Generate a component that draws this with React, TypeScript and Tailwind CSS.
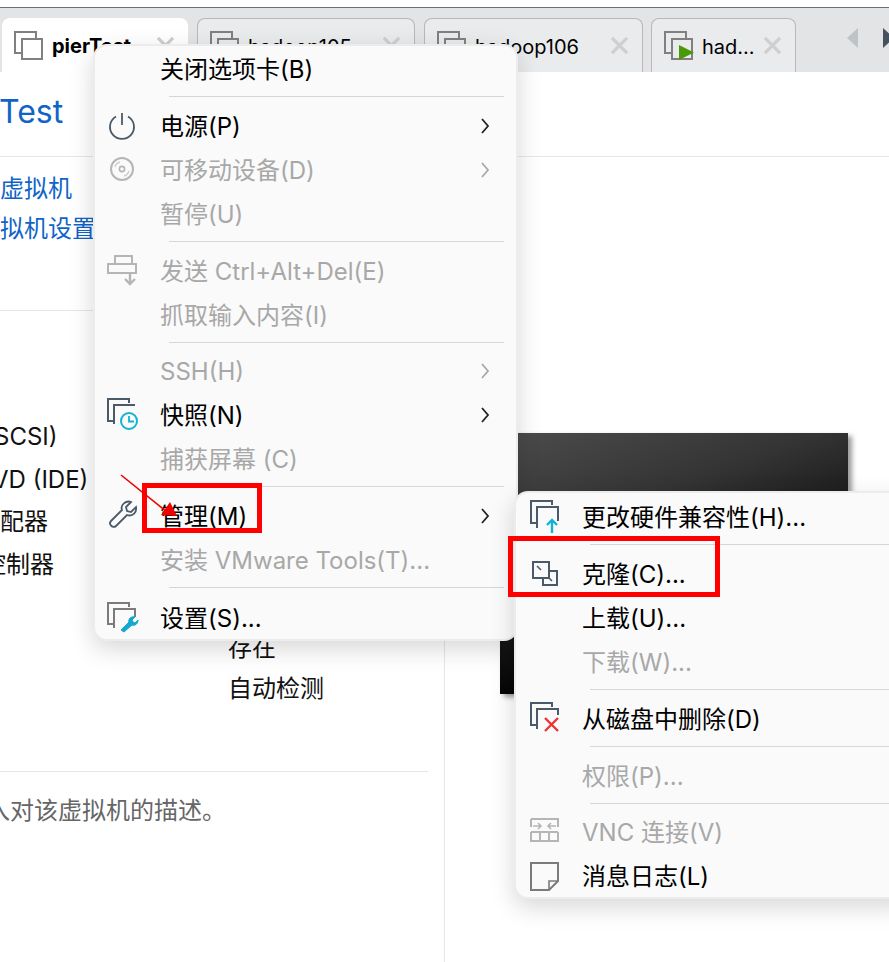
const font = "font-['Inter','Noto_Sans_CJK_SC',sans-serif]";

function Copies({ color = "#808080" }: { color?: string }) {
  return (
    <svg width="29" height="29" viewBox="0 0 29 29" fill="none" stroke={color} strokeWidth="2">
      <path d="M7 22H1V1h21v6" />
      <path d="M8 8h20v20H8z" />
    </svg>
  );
}

function Tab({ w, label, ml, active, run }: { w: string; label: string; ml: string; active?: boolean; run?: boolean }) {
  return (
    <div className={`${w} ${ml} h-[54px] shrink-0 rounded-t-[8px] flex items-center pl-[12px] ${active ? "bg-white" : "bg-[#eaebed] border border-b-0 border-[#b8b8b8]"}`}>
      <span className="relative block w-[29px] h-[29px] shrink-0">
        <Copies />
        {run && (
          <svg width="15" height="15" viewBox="0 0 15 15" className="absolute left-[15px] top-[14px]">
            <path d="M0 0l15 7.5L0 15z" fill="#4a9a08" />
          </svg>
        )}
      </span>
      <span className={`ml-[9px] pt-[2px] text-[20px] leading-[30px] whitespace-nowrap text-black ${active ? "font-bold" : ""}`}>{label}</span>
      <span className="ml-auto mr-[13px] block">
        <svg width="19" height="19" viewBox="0 0 20 20" stroke="#cfcfcf" strokeWidth="3.4"><path d="M2 2l16 16M18 2L2 18" /></svg>
      </span>
    </div>
  );
}

function Row({ label, disabled, arrow, icon, pl }: { label: string; disabled?: boolean; arrow?: boolean; icon?: React.ReactNode; pl: string }) {
  return (
    <div className={`h-[44px] relative flex items-center ${pl} pr-[24px] text-[24px] whitespace-nowrap ${disabled ? "text-[#a8a8a8]" : "text-black"}`}>
      {icon}
      <span className="pt-[4px]">{label}</span>
      {arrow && (
        <svg width="10" height="16" viewBox="0 0 10 16" fill="none" stroke={disabled ? "#a8a8a8" : "#222"} strokeWidth="1.8" className="absolute right-[26px] top-[15px]">
          <path d="M2 1l6 7-6 7" />
        </svg>
      )}
    </div>
  );
}

function Sep({ ml, h = "h-[13px]" }: { ml: string; h?: string }) {
  return (
    <div className={`${h} ${ml} pt-[6px]`}>
      <div className="h-px bg-[#d6d6d6]" />
    </div>
  );
}

const Ic = ({ children, left }: { children: React.ReactNode; left: string }) => (
  <svg width="32" height="34" viewBox="0 0 32 34" fill="none" className={`absolute ${left} top-[5px]`}>{children}</svg>
);

const slate = "#4a5a68";

export default function App() {
  return (
    <div className={`${font} relative w-[889px] h-[962px] overflow-hidden bg-white`}>
      <div className="h-[7px] bg-white" />
      <div className="h-px bg-[#6f6f6f]" />
      <div className="h-[64px] bg-[#e3e4e6] flex items-end pl-[2px] overflow-hidden relative">
        <Tab w="w-[186px]" ml="" label="pierTest" active />
        <Tab w="w-[218px]" ml="ml-[9px]" label="hadoop105" />
        <Tab w="w-[219px]" ml="ml-[9px]" label="hadoop106" />
        <Tab w="w-[145px]" ml="ml-[8px]" label="had..." run />
        <svg width="12" height="22" viewBox="0 0 12 22" className="absolute left-[847px] top-[20px]"><path d="M11 0v20L0 10z" fill="#bfc3c7" /></svg>
        <svg width="12" height="22" viewBox="0 0 12 22" className="absolute left-[883px] top-[20px]"><path d="M0 0v20l11-10z" fill="#46525e" /></svg>
      </div>

      <div className="h-[85px] border-b border-[#e6e6e6] flex items-center">
        <span className="text-[32px] leading-none text-[#0f64c8] mt-[-4px] ml-[-1px]">Test</span>
      </div>

      <div className="flex h-[805px]">
        <div className="w-[445px] shrink-0 border-r border-[#e6e6e6]">
          <div className="h-[154px] border-b border-[#e6e6e6] w-[428px] pt-[12px] text-[24px] leading-[40px] text-[#0f64c8] whitespace-nowrap">
            <div>虚拟机</div>
            <div>拟机设置</div>
          </div>
          <div className="relative h-[461px] w-[428px] border-b border-[#e6e6e6] text-[24px] text-[#111] whitespace-nowrap">
            <div className="pt-[105px] leading-[42.5px] overflow-hidden">
              <div className="ml-[-6px]">SCSI)</div>
              <div className="ml-[-8px]">VD (IDE)</div>
              <div>配器</div>
              <div className="ml-[-18px]">控制器</div>
            </div>
            <div className="absolute left-[228px] top-[316px] leading-[41px]">
              <div>存在</div>
              <div>自动检测</div>
            </div>
          </div>
          <div className="pt-[24px] text-[24px] leading-[30px] text-[#666] whitespace-nowrap overflow-hidden">
            <div className="ml-[-14px]">入对该虚拟机的描述。</div>
          </div>
        </div>
      </div>

      {/* VM thumbnail */}
      <div className="absolute left-[500px] top-[433px] w-[348px] h-[261px] bg-[linear-gradient(160deg,#4c4c4c_0%,#343434_30%,#000_72%)] shadow-[4px_3px_5px_rgba(0,0,0,0.4)]" />

      {/* main context menu */}
      <div className="absolute left-[93px] top-[44px] w-[425px] h-[597px] rounded-[14px] bg-[#fafafa] border-2 border-[#ececec] shadow-[0_8px_24px_rgba(0,0,0,0.16)]">
        <Row pl="pl-[65px]" label="关闭选项卡(B)" />
        <Sep ml="ml-[74px] mr-[12px]" />
        <Row pl="pl-[65px]" label="电源(P)" arrow icon={
          <Ic left="left-[12px]"><path d="M15 5v12" stroke={slate} strokeWidth="1.8" /><path d="M9 8.5a12 12 0 1 0 12 0" stroke={slate} strokeWidth="1.8" /></Ic>
        } />
        <Row pl="pl-[65px]" label="可移动设备(D)" disabled arrow icon={
          <Ic left="left-[12px]"><circle cx="15" cy="17" r="11" stroke="#b5b5b5" strokeWidth="2" /><circle cx="15" cy="17" r="2.6" stroke="#b5b5b5" strokeWidth="1.6" /><path d="M8 15a7 7 0 0 1 5-5M22 19a7 7 0 0 1-5 5" stroke="#cfcfcf" strokeWidth="1.5" /></Ic>
        } />
        <Row pl="pl-[65px]" label="暂停(U)" disabled />
        <Sep ml="ml-[74px] mr-[12px]" />
        <Row pl="pl-[65px]" label="发送 Ctrl+Alt+Del(E)" disabled icon={
          <Ic left="left-[12px]"><path d="M8 3h17v8H8zM1 11h28v9H1z" stroke="#b5b5b5" strokeWidth="2" /><path d="M23 20v11M18 26l5 5 5-5" stroke="#b5b5b5" strokeWidth="2.4" /></Ic>
        } />
        <Row pl="pl-[65px]" label="抓取输入内容(I)" disabled />
        <Sep ml="ml-[74px] mr-[12px]" h="h-[12px]" />
        <Row pl="pl-[65px]" label="SSH(H)" disabled arrow />
        <Row pl="pl-[65px]" label="快照(N)" arrow icon={
          <Ic left="left-[12px]"><path d="M7 24H1V2h21v4" stroke={slate} strokeWidth="2" /><path d="M7 27V8h21" stroke={slate} strokeWidth="2" /><circle cx="22" cy="24" r="8" fill="#fafafa" stroke="#12b2d4" strokeWidth="2" /><path d="M22 19v5.5h5" stroke="#12b2d4" strokeWidth="1.8" /></Ic>
        } />
        <Row pl="pl-[65px]" label="捕获屏幕 (C)" disabled />
        <Sep ml="ml-[74px] mr-[12px]" />
        <Row pl="pl-[65px]" label="管理(M)" arrow icon={
          <Ic left="left-[12px]"><path d="M24 4l-5 5 1 4 4 1 5-5c1 5-3 10-9 8L9 28c-3 3-8-2-5-5l11-11c-2-5 4-10 9-8z" stroke={slate} strokeWidth="1.8" /></Ic>
        } />
        <Row pl="pl-[65px]" label="安装 VMware Tools(T)..." disabled />
        <Sep ml="ml-[74px] mr-[12px]" h="h-[14px]" />
        <Row pl="pl-[65px]" label="设置(S)..." icon={
          <Ic left="left-[12px]"><path d="M7 24H1V3h21v4" stroke="#7b7b7b" strokeWidth="2" /><path d="M7 28V9h21v8" stroke="#7b7b7b" strokeWidth="2" /><path d="M14 30l8-8c-1-3 2-6 6-5l-3 3 1 2 2 1 3-3c0 4-3 6-6 5l-8 7z" fill="#12a8d0" stroke="#12a8d0" strokeWidth="1" /></Ic>
        } />
      </div>

      {/* submenu */}
      <div className="absolute left-[514px] top-[491px] w-[400px] h-[408px] pt-[1px] rounded-[14px] bg-[#fafafa] border-2 border-[#ececec] shadow-[0_8px_24px_rgba(0,0,0,0.16)] overflow-hidden">
        <Row pl="pl-[66px]" label="更改硬件兼容性(H)..." icon={
          <Ic left="left-[14px]"><path d="M7 24H1V2h21v4" stroke={slate} strokeWidth="2" /><path d="M7 29V8h21v14" stroke={slate} strokeWidth="2" /><path d="M22 34V21M17 26l5-5 5 5" stroke="#12b2d4" strokeWidth="2.4" /></Ic>
        } />
        <Sep ml="ml-[74px]" />
        <Row pl="pl-[66px]" label="克隆(C)..." icon={
          <Ic left="left-[14px]"><path d="M3 6h16v16H3z" stroke={slate} strokeWidth="2" /><path d="M19 15h8v14H13v-7" stroke={slate} strokeWidth="2" /><path d="M7 10l4 4M18 21l4 4" stroke={slate} strokeWidth="1.6" /></Ic>
        } />
        <Row pl="pl-[66px]" label="上载(U)..." />
        <Row pl="pl-[66px]" label="下载(W)..." disabled />
        <Sep ml="ml-[74px]" />
        <Row pl="pl-[66px]" label="从磁盘中删除(D)" icon={
          <Ic left="left-[14px]"><path d="M7 24H1V2h21v4" stroke={slate} strokeWidth="2" /><path d="M7 28V8h21v6" stroke={slate} strokeWidth="2" /><path d="M15 17l13 13M28 17L15 30" stroke="#ee3333" strokeWidth="2.4" /></Ic>
        } />
        <Sep ml="ml-[74px]" />
        <Row pl="pl-[66px]" label="权限(P)..." disabled />
        <Sep ml="ml-[74px]" h="h-[12px]" />
        <Row pl="pl-[66px]" label="VNC 连接(V)" disabled icon={
          <Ic left="left-[14px]"><path d="M1 5h27v8M1 5v8M1 18v9h27v-9M1 18h27M10 27v-9M19 27v-9" stroke="#b5b5b5" strokeWidth="2" /><path d="M3 12h8M8 9l3 3-3 3M26 12h-8M21 9l-3 3 3 3" stroke="#b5b5b5" strokeWidth="1.6" /></Ic>
        } />
        <Row pl="pl-[66px]" label="消息日志(L)" icon={
          <Ic left="left-[14px]"><path d="M1 5h27v18l-9 9H1z" stroke="#7b7b7b" strokeWidth="2" /><path d="M28 23h-9v9" stroke="#7b7b7b" strokeWidth="1.6" /></Ic>
        } />
      </div>

      {/* annotations */}
      <div className="absolute left-[142px] top-[483px] w-[120px] h-[50px] border-[5px] border-[#ff0000]" />
      <div className="absolute left-[508px] top-[536px] w-[212px] h-[61px] border-[5px] border-[#ff0000]" />
      <svg width="70" height="60" viewBox="0 0 70 60" className="absolute left-[120px] top-[474px]">
        <path d="M1 1l46 37" stroke="#f00000" strokeWidth="1.6" />
        <path d="M57 42L41 41l9-13z" fill="#f00000" />
      </svg>
    </div>
  );
}
